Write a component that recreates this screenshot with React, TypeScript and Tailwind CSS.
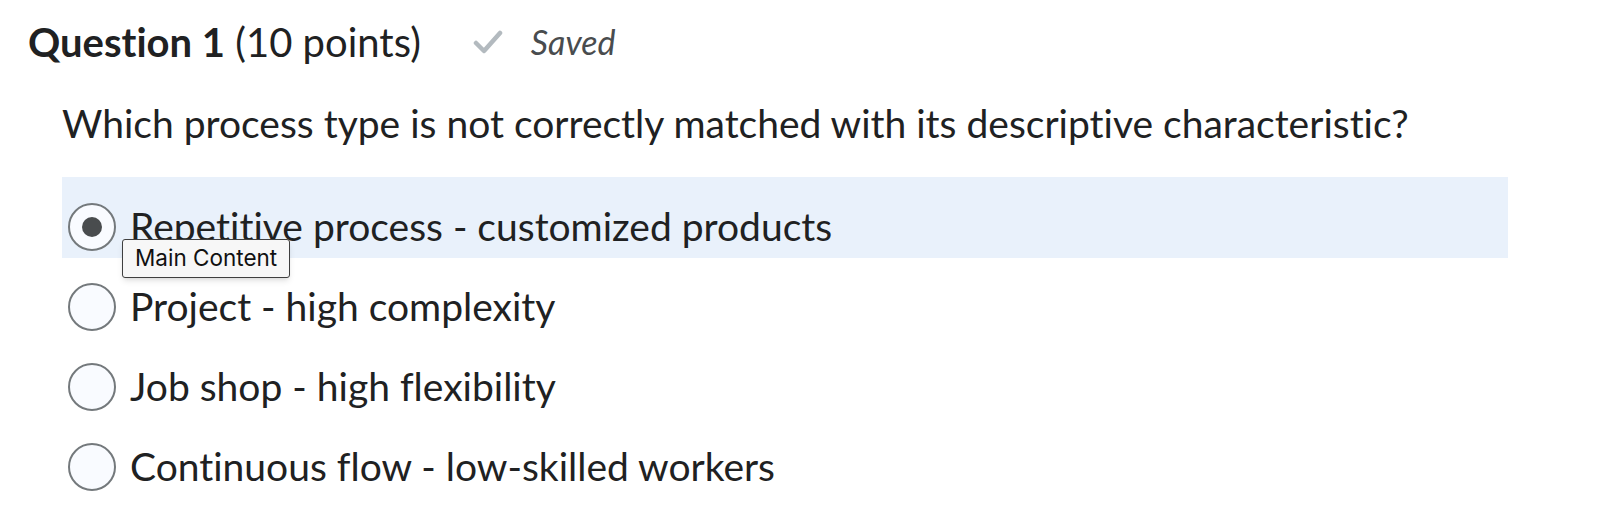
const options = [
  'Repetitive process - customized products',
  'Project - high complexity',
  'Job shop - high flexibility',
  'Continuous flow - low-skilled workers',
]

function Radio({ checked }: { checked?: boolean }) {
  return (
    <span className="flex h-12 w-12 shrink-0 items-center justify-center rounded-full border-2 border-[#74797c] bg-[#f9fbff]">
      {checked && <span className="h-5 w-5 rounded-full bg-[#494c4e]" />}
    </span>
  )
}

export default function App() {
  return (
    <div className="min-h-screen bg-white pl-[28px] pt-[16px] font-['Lato',sans-serif] text-[#202122] [font-variant-ligatures:no-common-ligatures]">
      <div className="flex items-center">
        <h2 className="text-[40px] leading-[48px]">
          <span className="font-bold">Question 1</span> (10 points)
        </h2>
        <svg className="ml-[52px] h-[24px] w-[30px]" viewBox="0 0 30 24" fill="none">
          <path d="M3 13l8 8L27 3" stroke="#b3babf" strokeWidth="4.5" strokeLinecap="round" strokeLinejoin="round" />
        </svg>
        <span className="ml-[28px] text-[34px] italic text-[#494c4e]">Saved</span>
      </div>

      <div className="ml-[34px] w-[1446px]">
        <p className="mt-[33px] whitespace-nowrap text-[39px] leading-[1.2]">
          Which process type is not correctly matched with its descriptive characteristic?
        </p>

        <div className="mt-[30px]">
          <div className="relative flex h-[81px] items-center gap-[14px] bg-[#e9f1fb] pl-[6px] pt-[19px]">
            <Radio checked />
            <span className="text-[39px] leading-[1.2]">{options[0]}</span>
            <div className="absolute left-[60px] top-[62px] flex h-[39px] items-center rounded-[3px] border-[1.5px] border-[#3f3f3f] bg-[#f7f7f7] px-[12px] font-['Inter',sans-serif] text-[22.5px] text-[#111111] shadow-md">
              Main Content
            </div>
          </div>
          <div className="mt-[9px]">
            {options.slice(1).map((o) => (
              <div key={o} className="flex h-20 items-center gap-[14px] pl-[6px]">
                <Radio />
                <span className="text-[39px] leading-[1.2]">{o}</span>
              </div>
            ))}
          </div>
        </div>
      </div>
    </div>
  )
}
